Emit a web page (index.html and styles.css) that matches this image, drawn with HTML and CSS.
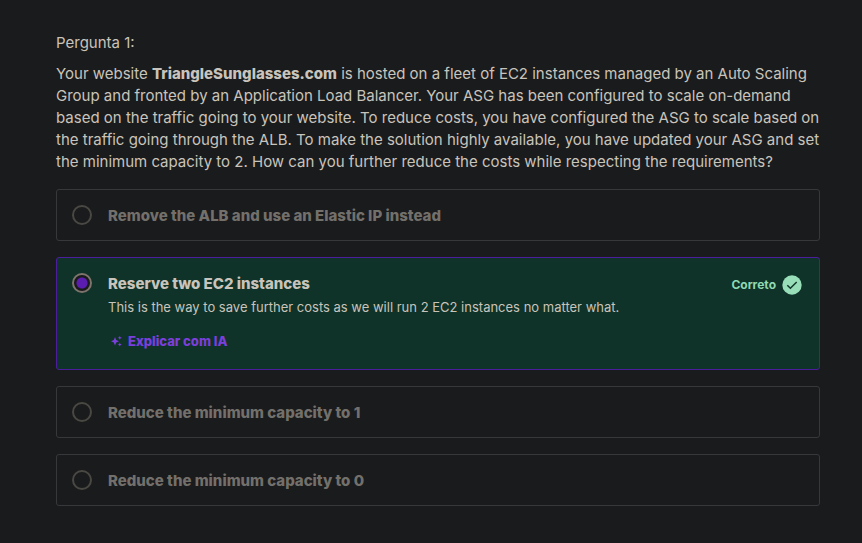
FILE: index.html
```html
<!DOCTYPE html>
<html lang="pt-BR">
<head>
<meta charset="utf-8">
<meta name="viewport" content="width=device-width, initial-scale=1">
<title>Pergunta 1</title>
<link rel="stylesheet" href="styles.css">
</head>
<body>
<main class="quiz">
  <p class="number">Pergunta 1:</p>
  <p class="prompt" id="prompt">Your website <strong>TriangleSunglasses.com</strong> is hosted on a fleet of EC2 instances managed by an Auto Scaling Group and fronted by an Application Load Balancer. Your ASG has been configured to scale on-demand based on the traffic going to your website. To reduce costs, you have configured the ASG to scale based on the traffic going through the ALB. To make the solution highly available, you have updated your ASG and set the minimum capacity to 2. How can you further reduce the costs while respecting the requirements?</p>
  <div class="answers" role="radiogroup" aria-labelledby="prompt">
    <div class="answer">
      <input class="radio" type="radio" name="answer" id="a1" disabled>
      <label class="title" for="a1">Remove the ALB and use an Elastic IP instead</label>
    </div>
    <div class="answer correct">
      <input class="radio" type="radio" name="answer" id="a2" checked>
      <div class="body">
        <label class="title" for="a2">Reserve two EC2 instances</label>
        <p class="why">This is the way to save further costs as we will run 2 EC2 instances no matter what.</p>
        <button class="explain" type="button">
          <svg class="sparkle" viewBox="0 0 16 16" aria-hidden="true"><path d="M7 4 8.2 7 11 8.2 8.2 9.4 7 12.4 5.8 9.4 3 8.2 5.8 7ZM11.8 2.8 12.4 4.2 13.8 4.8 12.4 5.4 11.8 6.8 11.2 5.4 9.8 4.8 11.2 4.2ZM11.8 9.6 12.4 11 13.8 11.6 12.4 12.2 11.8 13.6 11.2 12.2 9.8 11.6 11.2 11Z"/></svg>
          <span>Explicar com IA</span>
        </button>
      </div>
      <div class="status">
        <span>Correto</span>
        <svg class="check" viewBox="0 0 20 20" aria-hidden="true"><circle cx="10" cy="10" r="9.7"/><path d="M5.3 10.2 8.4 13.3 14.7 7"/></svg>
      </div>
    </div>
    <div class="answer">
      <input class="radio" type="radio" name="answer" id="a3" disabled>
      <label class="title" for="a3">Reduce the minimum capacity to 1</label>
    </div>
    <div class="answer">
      <input class="radio" type="radio" name="answer" id="a4" disabled>
      <label class="title" for="a4">Reduce the minimum capacity to 0</label>
    </div>
  </div>
</main>
</body>
</html>
```
FILE: styles.css
```css
* { box-sizing: border-box; }

body {
  margin: 0;
  background: #1a1b1d;
  color: #c9c4bb;
  font: 15px/22px Inter, "Liberation Sans", sans-serif;
}

p { margin: 0; }

strong { font-weight: 800; }

.quiz {
  max-width: 960px;
  margin: 0 auto;
  padding: 32px 42px 37px 56px;
}

.number { margin-bottom: 9px; }

.prompt { margin-bottom: 16px; }

.answers {
  display: flex;
  flex-direction: column;
  gap: 16px;
}

.answer {
  display: flex;
  align-items: flex-start;
  gap: 16px;
  padding: 15px 15px 14px;
  border: 1px solid #36383b;
  border-radius: 3px;
  color: #73706b;
}

.title {
  display: block;
  padding-top: 1px;
  font-weight: 800;
  line-height: 20px;
}

.radio {
  appearance: none;
  flex: none;
  width: 20px;
  height: 20px;
  margin: 0;
  border: 2px solid #4a4843;
  border-radius: 50%;
}

.correct {
  background: #0f3329;
  border-color: #4c1d9c;
  color: #c9c4bb;
}

.correct .radio {
  border-color: #7e746c;
  background: radial-gradient(circle, #5a1db0 5px, #191a1c 6px);
}

.body {
  flex: 1;
  min-width: 0;
}

.why {
  margin-top: 2px;
  font-size: 13px;
  line-height: 22px;
}

.explain {
  display: flex;
  align-items: center;
  gap: 4px;
  margin: 9px 0 0;
  padding: 4px 0;
  border: 0;
  background: none;
  color: #7b3fdc;
  font: 800 13px/20px Inter, "Liberation Sans", sans-serif;
  cursor: pointer;
}

.sparkle {
  width: 16px;
  height: 16px;
  fill: currentColor;
}

.status {
  display: flex;
  align-items: center;
  gap: 6px;
  margin: 2px 2px 0 0;
  color: #8fd9b2;
  font-size: 12px;
  font-weight: 700;
  line-height: 20px;
}

.check {
  width: 20px;
  height: 20px;
  fill: #98deb9;
}

.check path {
  fill: none;
  stroke: #12372c;
  stroke-width: 1.5;
}
```
